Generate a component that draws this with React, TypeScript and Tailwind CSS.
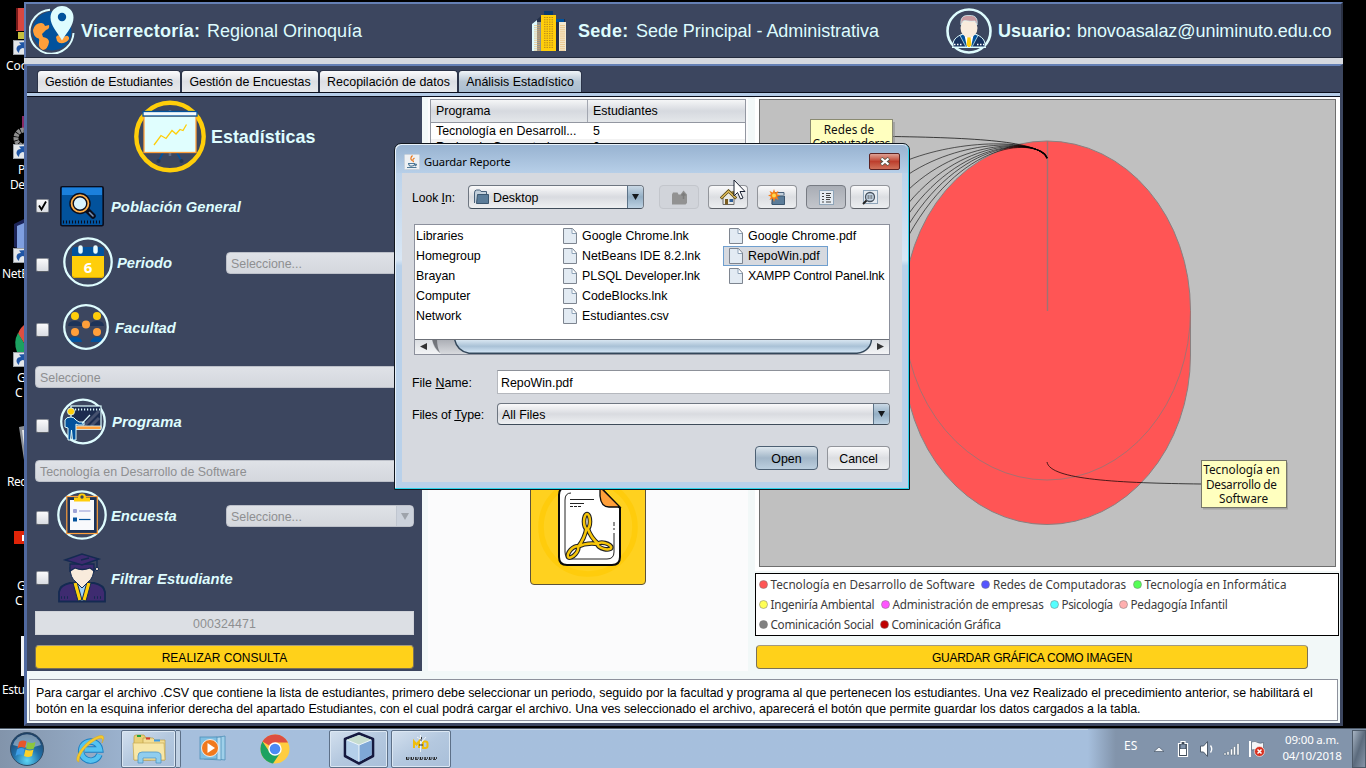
import React from "react";

const ARIAL = "font-['Liberation_Sans',Arial,sans-serif]";
const NOTO = "font-['Noto_Sans',sans-serif]";

/* ---------- Header icons ---------- */

function GlobeIcon() {
  return (
    <svg width="46" height="48" viewBox="0 0 46 48" className="shrink-0">
      <circle cx="23" cy="25" r="19.500" fill="#02529c" />
      <path d="M4 24 q2-7 8-7 q3 0 4 3 l4-1 q1 4-3 5 l-4 4 1 3 q6 1 6 5 q-1 7-6 8 q-5-2-4-8 q1-4-2-4 q-4-3-4-8z" fill="#ff9f3a" />
      <path d="M21 3.800 A22 22 0 1 0 44.500 27" fill="none" stroke="#defcfe" strokeWidth="2" />
      <path d="M27 31 q2-3 4-1 l2 3 q3-4 6-3 q3 3-2 6 q-6 3-9-1z" fill="#ff9f3a" />
      <path d="M33 0 a11.500 11.500 0 0 1 11.500 11.500 c0 8-6 14-11.500 23 c-5-9-11.500-15-11.500-23 a11.500 11.500 0 0 1 11.500-11.500z" fill="#defcfe" />
      <circle cx="33" cy="11" r="4.200" fill="#02529c" />
    </svg>
  );
}

function BuildingIcon() {
  const rows = Array.from({ length: 14 });
  return (
    <svg width="34" height="40" viewBox="0 0 34 40" className="shrink-0">
      <path d="M1 12 L9 5 V40 H1z" fill="#23304a" />
      <path d="M0 13 L5 9 V40 H0z" fill="#e0fbfd" />
      <rect x="5" y="11" width="4" height="29" fill="#8d8f8c" />
      <rect x="24" y="8" width="9" height="32" fill="#23304a" />
      <path d="M27 11 h7 v29 h-7z" fill="#f5ead0" />
      <rect x="24" y="8" width="8" height="3" fill="#02529c" />
      <rect x="12" y="0" width="9" height="4" fill="#0b3a6e" />
      <rect x="9" y="4" width="15" height="36" fill="#ffce0a" />
      {rows.map((_, i) => (
        <g key={i}>
          <path d={`M12 ${6.500 + i * 2.300} H22`} stroke="#b98a1c" strokeWidth="1" strokeDasharray="1.500 1" />
          <path d={`M2 ${14.500 + i * 1.900} H8 M28 ${14.500 + i * 1.900} H33`} stroke="#e6b366" strokeWidth=".6" />
        </g>
      ))}
    </svg>
  );
}

function UserIcon() {
  return (
    <svg width="46" height="46" viewBox="0 0 46 46" className="shrink-0">
      <circle cx="23" cy="23" r="21.500" fill="#3c465f" stroke="#defcfe" strokeWidth="2.600" />
      <path d="M7 39 C6 29 14 28 18 25 H28 C32 28 40 29 39 39z" fill="#17335f" stroke="#defcfe" strokeWidth="1" />
      <path d="M14 27.500 l5 -2 4 6 4-6 5 2 -6 11.500 h-6z" fill="#02529c" stroke="#defcfe" strokeWidth=".7" />
      <path d="M18 25 h10 l-3 14 h-4z" fill="#fff" />
      <path d="M21.500 29 h3 l1 8 -2.500 3 -2.500-3z" fill="#ffce0a" />
      <ellipse cx="23" cy="20" rx="8.500" ry="9.500" fill="#f9ebdc" />
      <path d="M15 17 C14 10 17 7 23 7.500 C30 7 32 11 31 17 L29 13 C24 14 19 12 17 13z" fill="#c79aa0" stroke="#defcfe" strokeWidth=".7" />
      <path d="M8 36.500 h8 M31 36.500 h7" stroke="#fff" strokeWidth="1.500" strokeDasharray="1.500 1.500" />
      <path d="M6 39.500 H40" stroke="#defcfe" strokeWidth="1.200" />
    </svg>
  );
}

/* ---------- Side panel icons ---------- */

function StatsIcon() {
  return (
    <svg width="72" height="73" viewBox="0 0 72 73" className="shrink-0">
      <circle cx="36" cy="36.500" r="33.700" fill="none" stroke="#ffce0a" strokeWidth="4.400" />
      <path d="M36 10 v3 M36 52 v4" stroke="#5b6b86" strokeWidth="2.500" />
      <path d="M29 53 l-4 7 M43 53 l4 7" stroke="#02529c" strokeWidth="1.600" />
      <circle cx="24.500" cy="61" r="2" fill="#263952" />
      <circle cx="47.500" cy="61" r="2" fill="#263952" />
      <rect x="10" y="16" width="52" height="36.500" fill="#e0fefe" stroke="#ff9f3a" strokeWidth="1.300" />
      <rect x="9" y="11.500" width="54" height="4.500" fill="#f4fafc" stroke="#02529c" strokeWidth="1.300" />
      <path d="M20 45 l7-9.500 5 3 6-8 4 3.500 4-4.500 3 1 3.500-6" fill="none" stroke="#ffce0a" strokeWidth="1.300" />
    </svg>
  );
}

function PopulationIcon() {
  return (
    <svg width="44" height="41" viewBox="0 0 44 41" className="shrink-0">
      <rect x=".8" y=".8" width="42.400" height="39" rx="1.500" fill="#02529c" stroke="#0a0d1c" strokeWidth="1.600" />
      <rect x="2" y="1.500" width="40" height="7.500" fill="#1b80dc" />
      <path d="M3 36 H41" stroke="#0a0d1c" strokeWidth="3" strokeDasharray="1 2" />
      <path d="M26 23 l7 7" stroke="#0a0d1c" strokeWidth="5.500" strokeLinecap="round" />
      <path d="M29.500 26.500 l3.500 3.500" stroke="#7a93b5" strokeWidth="1.600" strokeLinecap="round" />
      <circle cx="20" cy="17.500" r="10" fill="#ffb04a" stroke="#0a0d1c" strokeWidth="1.400" />
      <circle cx="20" cy="17.500" r="6.800" fill="#d9f4ff" stroke="#0a0d1c" strokeWidth="1.400" />
    </svg>
  );
}

function PeriodIcon() {
  return (
    <svg width="50" height="50" viewBox="0 0 50 50" className="shrink-0">
      <circle cx="25" cy="25" r="23.700" fill="none" stroke="#defcfe" strokeWidth="2.300" />
      <path d="M9 20 v-7 a3 3 0 0 1 3-3 h26 a3 3 0 0 1 3 3 v7 H9z" fill="#02529c" />
      <path d="M9 19 h32 v19 a3 3 0 0 1-3 3 H12 a3 3 0 0 1-3-3z" fill="#ffce0a" />
      <path d="M10 39.500 q1 1 3 1 h24 q2 0 3-1" stroke="#d9a900" fill="none" />
      <path d="M17.500 10.500 v4 M32.500 10.500 v4" stroke="#e8fcff" strokeWidth="4.500" strokeLinecap="round" />
      <text x="25" y="36" textAnchor="middle" fontSize="15" fontWeight="700" fontFamily="Noto Sans" fill="#fff">6</text>
    </svg>
  );
}

function FacultyIcon() {
  return (
    <svg width="46" height="46" viewBox="0 0 46 46" className="shrink-0">
      <path d="M5 22 q0-5 7-5 q7 0 7 5z M27 22 q0-5 7-5 q7 0 7 5z" fill="#1d3358" />
      <path d="M5 38 q0-5 7-5 q6 0 7 5z M27.500 38 q1-5 7-5 q6 0 6 5z" fill="#02529c" />
      <circle cx="12" cy="12" r="4" fill="#ffce0a" />
      <circle cx="34" cy="12" r="4" fill="#ffce0a" />
      <circle cx="23" cy="20.500" r="4" fill="#ff9f3a" />
      <circle cx="12" cy="28" r="4" fill="#ff9f3a" />
      <circle cx="34" cy="28" r="4" fill="#ff9f3a" />
      <circle cx="23" cy="23" r="21.800" fill="none" stroke="#defcfe" strokeWidth="2.300" />
    </svg>
  );
}

function ProgramIcon() {
  return (
    <svg width="46" height="47" viewBox="0 0 46 47" className="shrink-0">
      <circle cx="23" cy="23.500" r="21.800" fill="none" stroke="#defcfe" strokeWidth="2.300" />
      <rect x="11" y="8" width="30" height="22" fill="#1c2c4f" stroke="#defcfe" strokeWidth="1.200" />
      <path d="M24 28 L39 13 M31 28 l8-8" stroke="#46516e" strokeWidth="3" />
      <path d="M12 11.500 H40" stroke="#defcfe" strokeWidth="2" strokeDasharray="1.200 1.800" />
      <rect x="14" y="28" width="27" height="3.500" fill="#ff9f3a" stroke="#defcfe" strokeWidth=".8" />
      <path d="M5 22 q1-3 6-3 q3 0 5 3 l3 2 5 0 0 3 h-6 l-2-1 v6 v10 h-3.500 l-1-10 -1 10 H8 V30 l-3-1z" fill="#02529c" stroke="#defcfe" strokeWidth="1" />
      <path d="M22 25.500 L30 17" stroke="#defcfe" strokeWidth="1.200" />
      <circle cx="11" cy="13.500" r="3.600" fill="#ffce0a" stroke="#defcfe" strokeWidth=".8" />
    </svg>
  );
}

function SurveyIcon() {
  return (
    <svg width="50" height="50" viewBox="0 0 50 50" className="shrink-0">
      <circle cx="25" cy="25" r="23.700" fill="none" stroke="#defcfe" strokeWidth="2.300" />
      <rect x="9.800" y="6.500" width="30.500" height="37" fill="#1d3358" stroke="#ff9f3a" strokeWidth="1.200" />
      <rect x="13" y="10" width="24" height="30" fill="#f8f9fc" />
      <path d="M17 11.500 v-4 h4 q0-4 4-4 q4 0 4 4 h4 v4z" fill="#ffce0a" />
      <circle cx="25" cy="7" r="1.700" fill="#3c465f" />
      <rect x="16" y="19" width="4" height="4" rx="1" fill="#9ea3d6" />
      <path d="M22 21 h11.500" stroke="#b7bbe2" strokeWidth="1.600" />
      <rect x="16" y="27.500" width="4" height="4" fill="#02529c" />
      <path d="M22 29.500 h11.500" stroke="#02529c" strokeWidth="1.200" />
    </svg>
  );
}

function StudentIcon() {
  return (
    <svg width="48" height="50" viewBox="0 0 48 50" className="shrink-0">
      <path d="M1 48.500 V39 q1-7 11-9 h24 q10 2 11 9 v9.500z" fill="#3e2b70" stroke="#142a52" strokeWidth="1.800" />
      <path d="M18 28 h12 l-3 20 h-6z" fill="#9fd4fa" />
      <path d="M15 30 l4-1 5 18 -4 1z" fill="#ffce0a" stroke="#142a52" strokeWidth="1" />
      <path d="M33 30 l-4-1 -5 18 4 1z" fill="#ffce0a" stroke="#142a52" strokeWidth="1" />
      <path d="M12 14 h24 q0 11-6 15 l-6 6 -6-6 q-6-4-6-15z" fill="#f9ebdc" stroke="#142a52" strokeWidth="1" />
      <path d="M12 18 V11 h24 v7 l-4-3 q-8 3-15 0z" fill="#3e2b70" stroke="#142a52" strokeWidth="1.300" />
      <path d="M7 7 L24 1 L41 6 L24 12z" fill="#3e2b70" stroke="#142a52" strokeWidth="1.400" />
      <path d="M23 7 l8-2 M39 6 v8" stroke="#142a52" strokeWidth="1.300" />
      <circle cx="39" cy="16" r="1.600" fill="#f9ebdc" stroke="#142a52" />
      <path d="M3 44.500 h9 M36 44.500 h9" stroke="#142a52" strokeWidth="2.500" strokeDasharray="1 2" />
    </svg>
  );
}

/* ---------- Form controls ---------- */

function Check({ checked, className = "" }: { checked?: boolean; className?: string }) {
  return (
    <span className={`ml-[1px] h-[14px] w-[13px] shrink-0 rounded-[2px] border border-[#8d929b] border-b-[#5b6069] bg-linear-to-b from-[#fafafb] to-[#d9dce2] ${className}`}>
      {checked && (
        <svg width="11" height="12" viewBox="0 0 11 12">
          <path d="M2 5.500 L4.500 9.500 L9 1.500" fill="none" stroke="#000" strokeWidth="1.800" />
        </svg>
      )}
    </span>
  );
}

function DisabledCombo({ text, className = "" }: { text: string; className?: string }) {
  return (
    <div className={`flex h-[22px] shrink-0 overflow-hidden rounded-[4px] border border-[#bcc0c9] bg-linear-to-b from-[#dfe2e7] to-[#d4d7dd] text-[12.4px] text-[#8e8f91] ${className}`}>
      <span className="flex-1 pl-[4px] leading-[22px] whitespace-nowrap">{text}</span>
      <span className="flex w-[17px] items-center justify-center border-l border-[#c0c6d0] bg-[#ccd2dc]">
        <svg width="8" height="7"><path d="M0 0 h8 l-4 7z" fill="#9ea3ab" /></svg>
      </span>
    </div>
  );
}

const labelCls = "text-[14.8px] leading-5 font-bold italic text-[#defcfe] whitespace-nowrap";

function SidePanel() {
  return (
    <section className="h-[574px] w-[395px] shrink-0 bg-[#3c465f] pl-[8px]">
      <div className="flex h-[79px] items-center pl-[98px]">
        <span className="pl-[.5px]"><StatsIcon /></span>
        <span className="mt-[2px] ml-[5.500px] text-[17.9px] font-bold text-[#defcfe]">Estadísticas</span>
      </div>
      <div className="flex h-[60px] items-center">
        <Check checked />
        <span className="ml-[11px]"><PopulationIcon /></span>
        <span className={`${labelCls} ml-[7px] mt-[1px]`}>Población General</span>
      </div>
      <div className="flex h-[52px] items-center">
        <Check className="mt-[6px]" />
        <span className="ml-[14px]"><PeriodIcon /></span>
        <span className={`${labelCls} mt-[2px] ml-[4px] w-[109px]`}>Periodo</span>
        <DisabledCombo text="Seleccione..." className="mt-[2px] w-[188px]" />
      </div>
      <div className="flex h-[78px] items-center">
        <Check className="mt-[6px]" />
        <span className="ml-[14px]"><FacultyIcon /></span>
        <span className={`${labelCls} mt-[2px] ml-[6px]`}>Facultad</span>
      </div>
      <DisabledCombo text="Seleccione" className="w-[379px]" />
      <div className="flex h-[72px] items-center pb-[6px]">
        <Check className="mt-[9px]" />
        <span className="ml-[11px]"><ProgramIcon /></span>
        <span className={`${labelCls} mt-[2px] ml-[6px] tracking-[.08px]`}>Programa</span>
      </div>
      <DisabledCombo text="Tecnología en Desarrollo de Software" className="w-[379px]" />
      <div className="flex h-[66px] items-center">
        <Check className="mt-[6px]" />
        <span className="ml-[8px]"><SurveyIcon /></span>
        <span className={`${labelCls} mt-[2px] ml-[4px] w-[115px]`}>Encuesta</span>
        <DisabledCombo text="Seleccione..." className="mt-[2px] w-[188px]" />
      </div>
      <div className="flex h-[63px] items-center pb-[4px]">
        <Check className="mt-[1px]" />
        <span className="ml-[9px]"><StudentIcon /></span>
        <span className={`${labelCls} mt-[3px] ml-[5px]`}>Filtrar Estudiante</span>
      </div>
      <div className="h-[24px] w-[379px] border border-[#d0d3d9] bg-[#dcdfe4] text-center text-[12.4px] leading-[24px] tracking-[.1px] text-[#8e8f91]">000324471</div>
      <button className="mt-[10px] block h-[24px] w-[379px] rounded-[4px] border border-[#7b7258] border-t-[#a39a80] bg-[#ffd11a] pt-px text-center text-[12px] leading-[23px] text-black">REALIZAR CONSULTA</button>
    </section>
  );
}

function PdfIcon() {
  const loops = (
    <>
      <ellipse cx="56" cy="51.500" rx="3" ry="7.500" />
      <ellipse cx="42" cy="82" rx="3.200" ry="7" transform="rotate(42 42 82)" />
      <ellipse cx="73.500" cy="76" rx="7" ry="3" transform="rotate(14 73.500 76)" />
      <path d="M55.500 58 Q54 68 47 77 M56.500 58 Q60 68 67.500 74 M46 77 Q56 72 67 74" />
    </>
  );
  return (
    <svg width="114" height="114" viewBox="0 0 114 114">
      <circle cx="57" cy="57" r="47" fill="none" stroke="#ffcc0c" strokeWidth="5.500" />
      <path d="M36 17 h33 l20 21 v49 q0 8-8 8 H36 q-8 0-8-8 V25 q0-8 8-8z" fill="#fff" stroke="#0a0a0a" strokeWidth="2" />
      <path d="M69 17 v9 q1 11 9 11 h11z" fill="#ff9f3a" stroke="#0a0a0a" strokeWidth="1.300" />
      <path d="M40 23 q-6 0-6 7 v52 q0 7 7 7 h35 q7 0 7-7 v-19 M83 60 v-2 M83 56 v-4" fill="none" stroke="#222" strokeWidth="1" />
      <path d="M39 29.500 h24 M39 33.500 h14" stroke="#222" strokeWidth="1" />
      <path d="M39 36.500 h11" stroke="#222" strokeWidth="1" strokeDasharray="3 1" />
      <g fill="none" stroke="#222" strokeWidth="4.600">{loops}</g>
      <g fill="none" stroke="#f7c60a" strokeWidth="2.500">{loops}</g>
    </svg>
  );
}

function MiddlePanel() {
  return (
    <section className="ml-[6px] flex h-[574px] w-[320px] shrink-0 flex-col items-center bg-[#fbfbfc] pt-[2px] text-[12.4px] text-black">
      <div className="w-[316px] border border-[#9397a1] bg-white">
        <div className="flex h-[23px] border-b border-[#9397a1] bg-linear-to-b from-[#f5f6f7] via-[#d6d9df] to-[#e4e7ea] leading-[22px]">
          <span className="w-[157px] border-r border-[#a3a7b1] pl-[5px]">Programa</span>
          <span className="pl-[5px]">Estudiantes</span>
        </div>
        <div className="flex h-[16px] leading-[17px]">
          <span className="w-[157px] pl-[5px] whitespace-nowrap">Tecnología en Desarroll...</span>
          <span className="pl-[5px]">5</span>
        </div>
        <div className="flex h-[16px] bg-[#f2f2f2] leading-[17px]">
          <span className="w-[157px] pl-[5px] whitespace-nowrap">Redes de Computadoras</span>
          <span className="pl-[5px]">0</span>
        </div>
      </div>
      <div className="mt-auto mb-[86px] h-[116px] w-[116px] rounded-[4px] border border-[#5d533b] bg-[#ffd11f]">
        <PdfIcon />
      </div>
    </section>
  );
}

/* ---------- Chart ---------- */

const LINKS: [number, number][] = [[162, 138], [178, 137], [195, 136], [210, 135], [222, 135], [234, 134], [246, 134]];

function PieChart() {
  return (
    <svg width="577" height="468" viewBox="759 99 577 468" className="block">
      <rect x="759.500" y="99.500" width="576" height="467" fill="#c0c0c0" stroke="#6e6e6e" />
      <path d="M903.500 310.500 A143.500 169.500 0 0 1 1190.500 310.500 V355 A143.500 169.500 0 0 1 903.500 355z" fill="#ff5555" stroke="#8a8080" />
      <path d="M903.500 310.500 A143.500 169.500 0 0 0 1190.500 310.500" fill="none" stroke="#a87070" />
      <path d="M1047.500 141 V311" stroke="#a07272" strokeWidth="1.400" />
      <path d="M1047 158 C1040 142 985 138 893 136.500" fill="none" stroke="#000" strokeWidth=".7" />
      {LINKS.map(([end, c], i) => (
        <path key={i} d={`M1047 158 C1040 139 960 ${c} 903 ${end}`} fill="none" stroke="#000" strokeWidth=".6" />
      ))}
      <path d="M1040 151 Q1046 154 1047 158.500" fill="none" stroke="#000" strokeWidth="1.600" />
      <path d="M1047 462 C1050 480 1120 483 1201 484" fill="none" stroke="#000" strokeWidth=".7" />
      <rect x="813" y="122" width="82" height="40" fill="#8f8f8f" opacity=".6" />
      <rect x="810.500" y="119.500" width="82" height="40" fill="#ffffbf" stroke="#8a8a72" />
      <rect x="1203" y="462.500" width="85" height="47" fill="#8f8f8f" opacity=".6" />
      <rect x="1201.500" y="460.500" width="85" height="47" fill="#ffffbf" stroke="#77776a" />
      <g fontFamily="Noto Sans" fontSize="11.800" textAnchor="middle" fill="#111">
        <text x="849" y="134">Redes de</text>
        <text x="851.500" y="148" textLength="78">Computadoras</text>
        <text x="1241.500" y="474">Tecnología en</text>
        <text x="1241.500" y="489" textLength="71">Desarrollo de</text>
        <text x="1243.500" y="503">Software</text>
      </g>
    </svg>
  );
}

function LegendItem({ color, text, className = "" }: { color: string; text: string; className?: string }) {
  return (
    <span className={`flex shrink-0 items-center whitespace-nowrap ${className}`}>
      <svg width="9" height="9" className="mr-[3px] shrink-0"><circle cx="4.500" cy="4.500" r="4" fill={color} stroke="#777" strokeWidth=".5" /></svg>
      {text}
    </span>
  );
}

function Legend() {
  return (
    <div className={`mt-[2px] flex h-[63px] w-[584px] flex-col border border-black bg-white pt-[1px] pl-[2.500px] text-[11.700px] text-[#3c3c3c] ${NOTO}`}>
      <div className="flex h-[20px]">
        <LegendItem color="#ff5555" text="Tecnología en Desarrollo de Software" className="w-[222.500px]" />
        <LegendItem color="#5555ff" text="Redes de Computadoras" className="w-[151.500px] tracking-[-.08px]" />
        <LegendItem color="#55ff55" text="Tecnología en Informática" className="tracking-[-.04px]" />
      </div>
      <div className="flex h-[20px]">
        <LegendItem color="#ffff55" text="Ingeniría Ambiental" className="w-[122px] tracking-[-.27px]" />
        <LegendItem color="#ff55ff" text="Administración de empresas" className="w-[169px] tracking-[-.2px]" />
        <LegendItem color="#55ffff" text="Psicología" className="w-[69px] tracking-[-.4px]" />
        <LegendItem color="#ffafaf" text="Pedagogía Infantil" className="tracking-[-.2px]" />
      </div>
      <div className="flex h-[21px]">
        <LegendItem color="#808080" text="Cominicación Social" className="w-[121px] tracking-[-.27px]" />
        <LegendItem color="#c00000" text="Cominicación Gráfica" className="tracking-[-.32px]" />
      </div>
    </div>
  );
}

function ChartPanel() {
  return (
    <section className="ml-[7px] h-[574px] w-[585px]">
      <div className="h-[474px] bg-white pt-[2px] pl-[4px]"><PieChart /></div>
      <Legend />
      <button className="mt-[9px] ml-[1px] block h-[24px] w-[552px] rounded-[4px] border border-[#7b7258] border-t-[#a39a80] bg-[#ffd11a] pt-px text-center text-[12px] leading-[23px] tracking-[-.27px] text-black">GUARDAR GRÁFICA COMO IMAGEN</button>
    </section>
  );
}

/* ---------- Main window ---------- */

function Tab({ text, active, className = "" }: { text: string; active?: boolean; className?: string }) {
  return (
    <span className={`h-[22px] rounded-t-[4px] border border-b-0 border-[#2b3348] pt-[1px] text-center leading-[20px] whitespace-nowrap ${active ? "bg-linear-to-b from-[#f0f4f8] via-[#b7c6d4] to-[#a9bdd0]" : "bg-linear-to-b from-[#fbfbfc] via-[#dddfe4] to-[#e7e9ec]"} ${className}`}>{text}</span>
  );
}

function MainWindow() {
  return (
    <div className="absolute top-[2px] left-[24px] flex h-[724px] w-[1319px] flex-col">
      <header className="flex h-[56px] shrink-0 items-center border-t-2 border-r-2 border-b border-l-2 border-t-[#6580b5] border-r-[#2a3144] border-b-[#232a3c] border-l-[#5f7bb3] bg-[#3c465f] text-[18px] text-[#defcfe]">
        <div className="flex w-[506px] items-center pb-px pl-[3px]">
          <GlobeIcon />
          <span className="mt-[3px] ml-[6px] w-[126px] font-bold tracking-[.25px] whitespace-nowrap">Vicerrectoría:</span>
          <span className="mt-[3px] whitespace-nowrap">Regional Orinoquía</span>
        </div>
        <div className="flex w-[414px] items-center">
          <BuildingIcon />
          <span className="mt-[2px] ml-[12px] w-[58px] font-bold tracking-[.3px] whitespace-nowrap">Sede:</span>
          <span className="mt-[2px] tracking-[-.04px] whitespace-nowrap">Sede Principal - Administrativa</span>
        </div>
        <div className="flex items-center">
          <UserIcon />
          <span className="mt-[2px] ml-[6px] w-[79px] font-bold tracking-[.05px] whitespace-nowrap">Usuario:</span>
          <span className="mt-[2px] tracking-[-.07px] whitespace-nowrap">bnovoasalaz@uniminuto.edu.co</span>
        </div>
      </header>
      <div className="h-[6px] shrink-0 bg-[#d6d9df]" />
      <main className="flex flex-1 flex-col border-t-2 border-r-3 border-b-3 border-l-3 border-t-[#6580b5] border-r-[#3c465f] border-b-[#3c465f] border-l-[#5069a0] bg-[#f2f8f8]">
        <div className="flex h-[26px] shrink-0 items-end bg-[#3c465f] pl-[10px] text-[12.4px] text-black">
          <Tab text="Gestión de Estudiantes" className="w-[144px]" />
          <Tab text="Gestión de Encuestas" className="w-[138px]" />
          <Tab text="Recopilación de datos" className="w-[139px] tracking-[.05px]" />
          <Tab text="Análisis Estadístico" active className="w-[124px] tracking-[.05px]" />
        </div>
        <div className="h-[5px] shrink-0 border-y border-[#0a0e1c] bg-[#b4cbe6]" />
        <div className="flex">
          <SidePanel />
          <MiddlePanel />
          <ChartPanel />
        </div>
        <div className="mt-[8px] ml-[2px] h-[42px] w-[1309px] border border-[#8d919c] bg-white pt-[5px] pl-[6px] text-[12.4px] leading-[16px] tracking-[-.022px] text-black">
          <p className="whitespace-nowrap">Para cargar el archivo .CSV que contiene la lista de estudiantes, primero debe seleccionar un periodo, seguido por la facultad y programa al que pertenecen los estudiantes. Una vez Realizado el precedimiento anterior, se habilitará el</p>
          <p className="whitespace-nowrap">botón en la esquina inferior derecha del apartado Estudiantes, con el cual podrá cargar el archivo. Una ves seleccionado el archivo, aparecerá el botón que permite guardar los datos cargados a la tabla.</p>
        </div>
      </main>
    </div>
  );
}

/* ---------- File dialog ---------- */

function JavaIcon() {
  return (
    <svg width="16" height="16" viewBox="0 0 16 16" className="shrink-0">
      <rect x=".5" y=".5" width="15" height="15" rx="1" fill="#eef1f4" stroke="#c9d2dc" />
      <path d="M8.500 1.500 q-3 3-.5 5 M10.500 4 q-3 2-.8 4" fill="none" stroke="#e8761c" strokeWidth="1.200" />
      <path d="M4 9.500 h7 M4.500 9.500 q.5 3 3.500 2.500 q2.500 0 3-2.500 M11 10 q3 0 0 2 M3 13.500 h9.500" fill="none" stroke="#4e7896" strokeWidth="1.200" />
    </svg>
  );
}

function FileIcon() {
  return (
    <svg width="14" height="16" viewBox="0 0 14 16" className="shrink-0">
      <path d="M.5 .5 h9 l4 4.500 v10.500 h-13z" fill="#dfe8f1" stroke="#7e8590" />
      <path d="M1.500 1.500 h7.500 v4.500 h3.500 v8.500 h-11z" fill="#e3ebf3" />
      <path d="M9 1 v4.500 h4" fill="#fff" stroke="#8ea3b8" />
    </svg>
  );
}

function FolderIcon() {
  return (
    <svg width="16" height="16" viewBox="0 0 16 16">
      <path d="M1.500 14 V4 q0-3 2-3 h3 q1 0 1.500 1.500 h5.500 V6" fill="#c3d0dc" stroke="#49617a" />
      <path d="M4.500 5.500 h11 v9 H3.500z" fill="#5b7c99" stroke="#3b566f" />
    </svg>
  );
}

const toolBtn = "flex h-[24px] w-[40px] shrink-0 items-center justify-center rounded-[4px] border";
const toolBtnLive = "border-[#92959b] border-b-[#5c6067] bg-linear-to-b from-[#fafafb] via-[#dcdee2] to-[#eceef0]";

function ComboArrow() {
  return (
    <span className="flex w-[16px] items-center justify-center border-l border-[#5c7388] bg-linear-to-b from-[#c9d8e5] via-[#93aec4] to-[#bdd2e3]">
      <svg width="7" height="8"><path d="M0 1 h7 l-3.500 6z" fill="#15191d" /></svg>
    </span>
  );
}

function FileRow({ text, selected, className = "" }: { text: string; selected?: boolean; className?: string }) {
  return (
    <div className="flex">
      <span className={`flex h-[20px] items-center border pr-[7px] pl-[5px] whitespace-nowrap ${selected ? "border-[#6f9fcf] bg-[#d6d9df]" : "border-transparent"}`}>
        <FileIcon />
        <span className={`ml-[5px] ${className}`}>{text}</span>
      </span>
    </div>
  );
}

function Dialog() {
  return (
    <div className="absolute top-[143px] left-[394px] flex h-[347px] w-[516px] flex-col rounded-t-[7px] border border-[#10161e] bg-[#b9d1ea] shadow-[inset_-1px_-1px_0_#2bd3ea,inset_1px_1px_0_#e9f2fa]">
      <div className="mx-px mt-px flex h-[28px] shrink-0 items-center rounded-t-[6px] bg-linear-to-b from-[#98b3d1] to-[#b7cfe8] pl-[8px]">
        <span className="mt-[5px]"><JavaIcon /></span>
        <span className={`mt-[6px] ml-[4px] text-[11.200px] tracking-[-.12px] text-black ${NOTO}`}>Guardar Reporte</span>
        <span className="mt-[5px] mr-[8px] ml-auto flex h-[17px] w-[31px] items-center justify-center rounded-[2px] border border-[#5b2222] bg-linear-to-b from-[#dda094] via-[#bd3e2d] to-[#cf7059]">
          <svg width="12" height="9" viewBox="0 0 12 9"><path d="M2 1.500 L10 7.500 M10 1.500 L2 7.500" stroke="#554" strokeWidth="4" /><path d="M2.500 1.500 L9.500 7.500 M9.500 1.500 L2.500 7.500" stroke="#fff" strokeWidth="2.300" /></svg>
        </span>
      </div>
      <div className="mx-px flex h-[309px]">
        <div className="w-[6px] bg-linear-to-b from-[#bcd3eb] via-[#d9e7f5] via-28% to-[#b9d1ea] to-30%" />
        <div className="w-[500px] bg-[#d6d9df] text-[12.4px] text-black">
          <div className="flex h-[36px] pt-[12px] pl-[10px]">
            <span className="w-[56px] pt-px text-[12.1px] leading-[25px]">Look <u>I</u>n:</span>
            <div className="flex h-[24px] w-[176px] overflow-hidden rounded-[4px] border border-[#6e7681] border-b-[#3f4c5a] bg-linear-to-b from-[#fafafb] via-[#d9dbe0] to-[#eef0f2]">
              <span className="flex flex-1 items-center pl-[4px]"><FolderIcon /><span className="mt-[2px] ml-[4px]">Desktop</span></span>
              <ComboArrow />
            </div>
            <span className={`${toolBtn} ml-[15px] border-[#c3c6cc] bg-[#d1d4da]`}>
              <svg width="17" height="17" viewBox="0 0 17 17"><path d="M1 15.500 V5.500 l1-2 h4.500 l1 2 h2 l3-4 L16 5.500 V14 l-1.500 1.500z" fill="#929292" /><path d="M12.500 5 v5 M10.500 6.500 l2-2 2 2" fill="none" stroke="#7c7c7c" strokeWidth="1.500" /></svg>
            </span>
            <span className={`${toolBtn} ml-[9px] ${toolBtnLive}`}>
              <svg width="17" height="17" viewBox="0 0 17 17"><path d="M3 8.500 L8.500 3 L14 8.500 V15.500 H3z" fill="#e9e9e4" stroke="#6a6a6a" /><path d="M11.500 3 h2 v3" fill="none" stroke="#8a6d1c" strokeWidth="1.500" /><path d="M.8 9.500 L8.500 2 L16.200 9.500" fill="none" stroke="#5c4a14" strokeWidth="3" /><path d="M1.300 9 L8.500 2.200 L15.700 9" fill="none" stroke="#e3c05c" strokeWidth="1.300" /><rect x="5" y="10" width="3" height="5.500" fill="#7a5c20" /><rect x="9.500" y="10" width="3.500" height="3" fill="#2f5f9a" /></svg>
            </span>
            <span className={`${toolBtn} ml-[9px] ${toolBtnLive}`}>
              <svg width="18" height="17" viewBox="0 0 18 17"><path d="M4 15 V6 h2 V3.500 h10 V6" fill="#c3d0dc" stroke="#49617a" /><path d="M5 7 h11.500 v8.500 H4z" fill="#5b7c99" stroke="#3b566f" /><path d="M6 0 l1.200 3.400 3.300-1.500-1.500 3.300 3.400 1.300-3.400 1.200 1.500 3.300-3.300-1.500L6 13l-1.200-3.500-3.300 1.500 1.500-3.300L0 6.500l3-1.300L1.500 1.900l3.300 1.500z" fill="#f57f17" /><circle cx="6" cy="6.500" r="2" fill="#ffd94c" /></svg>
            </span>
            <span className={`${toolBtn} ml-[9px] border-[#777b83] bg-linear-to-b from-[#a9adb5] to-[#c3c6cc]`}>
              <svg width="15" height="15" viewBox="0 0 15 15"><rect x=".5" y=".5" width="14" height="14" fill="#e6ecf2" stroke="#8fa5b9" /><path d="M3 3.500 h2 M3 6.500 h2 M3 9.500 h2 M3 12 h2 M7 3.500 h5 M7 5.500 h4 M7 7.500 h5 M7 9.500 h4 M7 12 h5" stroke="#444" /></svg>
            </span>
            <span className={`${toolBtn} ml-[4px] ${toolBtnLive}`}>
              <svg width="16" height="15" viewBox="0 0 16 15"><rect x="1.500" y=".5" width="14" height="13" fill="#e6ecf2" stroke="#8fa5b9" /><circle cx="8" cy="7" r="4.500" fill="#c5d6e6" stroke="#48525e" strokeWidth="1.300" /><path d="M5.500 6 h5 M5.500 8 h5" stroke="#444" strokeWidth="1.200" strokeDasharray="2 .8" /><path d="M4.500 10.500 L1 14" stroke="#222" strokeWidth="2" /></svg>
            </span>
          </div>
          <div className="mt-[15px] ml-[12px] flex h-[131px] w-[476px] flex-col border border-[#8c909c] bg-white">
            <div className="flex flex-1 leading-[20px]">
              <div className="w-[142px] shrink-0 pt-px pl-px">
                {["Libraries", "Homegroup", "Brayan", "Computer", "Network"].map((t) => <div key={t}>{t}</div>)}
              </div>
              <div className="w-[166px] shrink-0 pt-px">
                {["Google Chrome.lnk", "NetBeans IDE 8.2.lnk", "PLSQL Developer.lnk", "CodeBlocks.lnk", "Estudiantes.csv"].map((t) => <FileRow key={t} text={t} />)}
              </div>
              <div className="shrink-0 pt-px">
                <FileRow text="Google Chrome.pdf" />
                <FileRow text="RepoWin.pdf" selected />
                <FileRow text="XAMPP Control Panel.lnk" className="tracking-[-.21px]" />
              </div>
            </div>
            <svg width="474" height="15" viewBox="0 0 474 15" className="shrink-0">
              <defs>
                <linearGradient id="track" x1="0" x2="0" y1="0" y2="1"><stop offset="0" stopColor="#a9acb3" /><stop offset="1" stopColor="#d8dade" /></linearGradient>
                <linearGradient id="end" x1="0" x2="0" y1="0" y2="1"><stop offset="0" stopColor="#d9dce0" /><stop offset="1" stopColor="#f3f4f6" /></linearGradient>
                <linearGradient id="thumb" x1="0" x2="0" y1="0" y2="1"><stop offset="0" stopColor="#dfeaf3" /><stop offset=".15" stopColor="#cfdfec" /><stop offset=".5" stopColor="#a9c1d6" /><stop offset="1" stopColor="#d9ebfa" /></linearGradient>
              </defs>
              <rect width="474" height="15" fill="url(#track)" />
              <path d="M0 0 H17 Q18 10 26 15 H0z" fill="url(#end)" />
              <path d="M17 0 Q19 9 25 14 Q22 8 22 0z" fill="#55585e" opacity=".7" />
              <path d="M456 0 H474 V15 H446 Q456 11 456 0z" fill="url(#end)" />
              <path d="M39.500 0 Q42 12 54 14.500 H442 Q456 12 456.500 0z" fill="url(#thumb)" />
              <path d="M39.500 0 Q42 12 54 14.300 H442 Q456 12 456.500 0" fill="none" stroke="#33475a" strokeWidth="1.400" />
              <path d="M0 .5 H474" stroke="#6c7078" />
              <path d="M5 7.500 l7-3.500 v7z M469 7.500 l-7-3.500 v7z" fill="#333" />
            </svg>
          </div>
          <div className="mt-[15px] flex h-[24px] pl-[10px] leading-[25px]">
            <span className="w-[85px] pt-px">File <u>N</u>ame:</span>
            <span className="w-[393px] border border-[#b5b8be] border-t-[#8d9199] bg-white pl-[3px] leading-[24px]">RepoWin.pdf</span>
          </div>
          <div className="mt-[9px] flex h-[22px] pl-[10px] leading-[23px]">
            <span className="w-[85px] pt-px tracking-[-.1px]">Files of <u>T</u>ype:</span>
            <div className="flex w-[393px] overflow-hidden rounded-[4px] border border-[#6e7681] border-b-[#3f4c5a] bg-linear-to-b from-[#fafafb] via-[#d9dbe0] to-[#eef0f2]">
              <span className="flex-1 pt-px pl-[4px] leading-[21px]">All Files</span>
              <ComboArrow />
            </div>
          </div>
          <div className="mt-[21px] flex justify-end gap-[9px] pr-[12px] leading-[23px]">
            <button className="h-[24px] w-[63px] rounded-[4px] border border-[#4d6073] bg-linear-to-b from-[#dde6ed] via-[#a2b6c8] to-[#bccfdf] pt-px text-center">Open</button>
            <button className="h-[24px] w-[63px] rounded-[4px] border border-[#92959b] border-b-[#5c6067] bg-linear-to-b from-[#fafafb] via-[#dcdee2] to-[#eceef0] pt-px text-center">Cancel</button>
          </div>
        </div>
        <div className="w-[6px] bg-linear-to-b from-[#bcd3eb] via-[#d9e7f5] via-28% to-[#b9d1ea] to-30%" />
      </div>
    </div>
  );
}

/* ---------- Desktop ---------- */

function ShortcutArrow({ className }: { className: string }) {
  return (
    <svg width="14" height="15" viewBox="0 0 14 15" className={`absolute left-[13px] ${className}`}>
      <rect x=".5" y=".5" width="14" height="14" fill="#e4e7ea" stroke="#9a9fa5" />
      <path d="M6 13 C2 10 3 5 8 5 L6 2.500 L14 2 V9 L9.500 8 Q6 9 6 13z" fill="#1f55a5" />
    </svg>
  );
}

function DesktopIcons() {
  return (
    <div className={`absolute top-0 left-0 h-[729px] w-[60px] text-[12px] leading-[15px] whitespace-nowrap text-white ${NOTO}`}>
      <svg width="24" height="729" viewBox="0 0 24 729" className="absolute top-0 left-0">
        <path d="M16 8 h8 v23 h-8z" fill="#d84840" />
        <path d="M16 8 h2 v22 h-2z" fill="#761919" />
        <path d="M18 32 h6 v7 h-6z" fill="#c5bf3e" />
        <path d="M22 116 h2 v14 h-2z" fill="#8a2a63" />
        <circle cx="24" cy="138" r="8" fill="none" stroke="#8f8f8f" strokeWidth="5" strokeDasharray="3 .8" />
        <path d="M14 224 L24 219 V250 L14 247z" fill="#1c2458" />
        <path d="M17 226 L24 223 V250 H17z" fill="#7f9fe0" />
        <path d="M24 325 A18 18 0 0 0 18 334 L24 343z" fill="#dd4f41" />
        <path d="M18 333 A22 22 0 0 0 17 352 H24 V343z" fill="#1ca261" />
        <path d="M19 427 L24 426 V460z" fill="#8b8f96" />
        <path d="M22 430 L24 430 V446z" fill="#e6e8ea" />
        <path d="M14 531 h10 v13 h-10z" fill="#e02408" />
        <path d="M22 535 h2 v6 h-2z" fill="#fff" />
        <path d="M21 636 h3 v40 h-3z" fill="#f1f3f5" />
      </svg>
      <ShortcutArrow className="top-[40px]" />
      <ShortcutArrow className="top-[144px]" />
      <ShortcutArrow className="top-[248px]" />
      <ShortcutArrow className="top-[352px]" />
      <span className="absolute top-[58px] left-[6px]">Coo</span>
      <span className="absolute top-[162px] left-[18px]">P</span>
      <span className="absolute top-[177px] left-[10px] tracking-[-.4px]">De</span>
      <span className="absolute top-[266px] left-[2px] tracking-[-.3px]">NetB</span>
      <span className="absolute top-[370px] left-[17px] tracking-tighter">G</span>
      <span className="absolute top-[385px] left-[15px]">C</span>
      <span className="absolute top-[474px] left-[7px] tracking-[-.5px]">Rec</span>
      <span className="absolute top-[578px] left-[17px] tracking-tighter">G</span>
      <span className="absolute top-[593px] left-[15px]">C</span>
      <span className="absolute top-[682px] left-[2px] tracking-[-.3px]">Estu</span>
    </div>
  );
}

function StartOrb() {
  return (
    <svg width="36" height="36" viewBox="0 0 36 36">
      <defs>
        <radialGradient id="orb" cx=".5" cy=".85" r=".8"><stop offset="0" stopColor="#5fd6f5" /><stop offset=".5" stopColor="#2272ab" /><stop offset="1" stopColor="#1c3f66" /></radialGradient>
      </defs>
      <circle cx="18" cy="18" r="16.500" fill="url(#orb)" stroke="#2f4a63" />
      <path d="M4 14 A14.500 14.500 0 0 1 32 14 Q18 19 4 14z" fill="#cfe0ec" opacity=".5" />
      <path d="M10 11 q4-2.500 7.500-.5 l-1.500 6.500 q-4-2-7.500 .5z" fill="#e8562a" />
      <path d="M18.500 11 q4 2 8 0 l-1.500 6.500 q-4 2-8 0z" fill="#8cc63e" />
      <path d="M8 18.500 q4-2.500 7.500-.5 l-1.500 6.500 q-4-2-7.500 .5z" fill="#3f9fe8" />
      <path d="M16.500 18.500 q4 2 8 0 l-1.500 6.500 q-4 2-8 0z" fill="#fcd12a" />
    </svg>
  );
}

function IeIcon() {
  return (
    <svg width="32" height="32" viewBox="0 0 32 32">
      <path d="M25.500 21.500 A9.500 9.500 0 1 1 26 16.500 H11" fill="none" stroke="#1b7fc2" strokeWidth="6.400" />
      <path d="M25.500 21.500 A9.500 9.500 0 1 1 26 16.500 H11" fill="none" stroke="#55c2f0" strokeWidth="4.600" />
      <path d="M5 29 C-2 28 8 10 22 4 C31 0 31 5 28 10 C30 4 26 4 20 8 C10 14 4 24 5 29z" fill="#f5c92e" stroke="#d9a818" strokeWidth=".5" />
    </svg>
  );
}

function ExplorerIcon() {
  return (
    <svg width="34" height="30" viewBox="0 0 34 30">
      <path d="M2 3 q0-2 2-2 h8 l2 3 h5 v22 H2z" fill="#e9cf77" stroke="#b99b43" strokeWidth=".7" />
      <path d="M11 4 h10 l2 2 h10 v20 H11z" fill="#f3de95" stroke="#b99b43" strokeWidth=".7" />
      <path d="M5 2 h4" stroke="#23a33a" strokeWidth="2" /><path d="M14 4.500 h4" stroke="#d3392d" strokeWidth="2" /><path d="M22 6.500 h6" stroke="#3f9ae0" strokeWidth="2" />
      <path d="M1 9 h31 l1 17 H2z" fill="#f7e7a8" stroke="#c7aa55" strokeWidth=".7" />
      <path d="M6 29 V22 q0-4 4-4 h14 q5 0 5 4 v7 h-5 v-5 h-13 v5z" fill="#90cdee" stroke="#4f94c4" strokeWidth=".8" />
    </svg>
  );
}

function WmpIcon() {
  return (
    <svg width="30" height="27" viewBox="0 0 30 27">
      <path d="M8 4 l18-3 v24 l-18-2z" fill="#9fd0ea" stroke="#4f8fb8" strokeWidth=".8" />
      <path d="M5 3 l17 -1 v23 l-17-1z" fill="#b9def2" stroke="#4f8fb8" strokeWidth=".8" />
      <rect x="1" y="2" width="17" height="22" fill="#7fbfe2" stroke="#4f8fb8" strokeWidth=".8" />
      <circle cx="11" cy="13" r="8.500" fill="#f0791e" stroke="#fff" strokeWidth=".8" />
      <path d="M8.500 8 v10 l7.500-5z" fill="#fff" />
    </svg>
  );
}

function ChromeIcon() {
  return (
    <svg width="30" height="30" viewBox="0 0 30 30">
      <circle cx="15" cy="15" r="14.500" fill="#ffcd40" />
      <path d="M15 15 L2.500 7.600 A14.500 14.500 0 0 1 28 8.500 H15z" fill="#dd4f41" />
      <path d="M2.500 7.600 A14.500 14.500 0 0 0 13 29.400 L20.500 18.500 L15 15 L9.500 18z" fill="#1ca261" />
      <circle cx="15" cy="15" r="6.700" fill="#fff" />
      <circle cx="15" cy="15" r="5.300" fill="#4a8af4" />
    </svg>
  );
}

function CubeIcon() {
  return (
    <svg width="32" height="33" viewBox="0 0 32 33">
      <path d="M16 1.500 L30 7 V24 L16 31.500 L2 24 V7z" fill="#a8c6e2" stroke="#15193f" strokeWidth="2.600" strokeLinejoin="round" />
      <path d="M16 3 L28.500 7.800 L16 13 L3.500 7.800z" fill="#c7ddcf" />
      <path d="M3.500 8 L16 13 V30 L3.500 23z" fill="#b4cfea" />
      <path d="M28.500 8 L16 13 V30 L28.500 23z" fill="#7fa8d6" />
      <path d="M4 8 L16 13 L28 8 M16 13 V29" fill="none" stroke="#eef6fb" strokeWidth="1" />
    </svg>
  );
}

function AppIcon() {
  return (
    <svg width="34" height="28" viewBox="0 0 34 28">
      <path d="M10 13 V6.500 l2.500 3 2.500-3 V13 M19 6.500 h2.500 q2 0 2 2 v2.500 q0 2-2 2 h-2.500z" fill="none" stroke="#f0bd0a" strokeWidth="2" />
      <path d="M16.500 0 V17 M13 2 l6 4 M17 8 l5 -6" stroke="#eef4f8" strokeWidth="1" />
      <path d="M17.500 2 v2 M16 5 h2 M15 10 h4" stroke="#222" strokeWidth=".9" />
      <path d="M2 23 h31" stroke="#1a1a1a" strokeWidth="2.200" strokeDasharray="1.300 1.200 .8 1.300" />
      <path d="M2 24.500 h31" stroke="#1a1a1a" strokeWidth=".8" strokeDasharray="3 1.500" />
    </svg>
  );
}

const taskBtn = "flex h-[38px] shrink-0 items-center justify-center rounded-[2px] border border-[#5d7088] bg-linear-to-br from-[#d3e0ee] via-[#b4c8df] to-[#a9bfd9] shadow-[inset_0_0_0_1px_#dbe7f3]";

function Taskbar() {
  return (
    <footer className="absolute top-[728px] left-0 flex h-[40px] w-[1366px] items-center border-t border-[#4e5a69] bg-linear-to-r from-[#8294ab] via-[#a6bfdd] via-13% to-[#a6bfdd] to-80% shadow-[inset_0_1px_0_#c6d6e6]">
      <span className="ml-[9px] w-[65px]"><StartOrb /></span>
      <span className="w-[47px]"><IeIcon /></span>
      <span className={`${taskBtn} w-[55px]`}><ExplorerIcon /></span>
      <span className="h-[38px] w-[5px] rounded-r-[2px] border border-l-0 border-[#5d7088] bg-[#bfd0e3]" />
      <span className="ml-[18px] w-[61px]"><WmpIcon /></span>
      <span className="w-[69px]"><ChromeIcon /></span>
      <span className={`${taskBtn} w-[59px]`}><CubeIcon /></span>
      <span className={`${taskBtn} ml-[3px] w-[60px]`}><AppIcon /></span>
      <div className={`ml-auto flex h-full items-center bg-linear-to-r from-[#a6bfdd] via-[#8294ab] via-10% to-[#8294ab] pl-[36px] text-[11.500px] text-white ${NOTO}`}>
        <span className="w-[28px] pb-[5px] text-[12px]">ES</span>
        <svg width="14" height="10" className="mt-[2px]"><path d="M7 2 l5 4.500 h-10z" fill="#eef2f6" stroke="#4c5a6b" strokeWidth=".7" /></svg>
        <svg width="14" height="18" viewBox="0 0 14 18" className="ml-[10px]"><path d="M5 1.500 h4 v2 h2.500 v13 h-9 v-13 h2.500z" fill="#3e4a58" stroke="#fff" strokeWidth="1.200" /><path d="M4.500 4.500 h5 v4 h-5z" fill="#8294ab" /><rect x="4" y="9" width="6" height="6" fill="#fff" /></svg>
        <svg width="16" height="18" viewBox="0 0 16 18" className="ml-[9px]"><path d="M1.500 6 h3 l4-4.500 v15 l-4-4.500 h-3z" fill="#fff" stroke="#4c5a6b" /><path d="M11.500 5.500 q2.500 3.500 0 7" fill="none" stroke="#fff" strokeWidth="1.300" /></svg>
        <svg width="18" height="14" viewBox="0 0 18 14" className="ml-[8px]"><path d="M1 11 h2 v2 h-2z M4 9.500 h2 v3.500 h-2z M7.500 7 h2 v6 h-2z M10.500 4.500 h2 v8.500 h-2z M14 1.500 h2 v11.500 h-2z" fill="#fff" stroke="#4c5a6b" strokeWidth=".4" /></svg>
        <svg width="18" height="18" viewBox="0 0 18 18" className="ml-[7px]"><path d="M2 1 v16" stroke="#fff" strokeWidth="2" /><path d="M3.500 2 q4-1.500 6 .5 q3 1.500 6 0 v8 q-3 1.500-6 0 q-3-1.500-6-.5z" fill="#f3f5f7" stroke="#4c5a6b" strokeWidth=".6" /><circle cx="11.500" cy="11.500" r="5" fill="#d8301f" stroke="#fff" strokeWidth=".6" /><path d="M9.500 9.500 l4 4 M13.500 9.500 l-4 4" stroke="#fff" strokeWidth="1.500" /></svg>
        <span className="ml-[9px] w-[74px] pb-px text-center leading-[16.500px] tracking-[-.2px]">09:00 a.m.<br />04/10/2018</span>
        <span className="ml-[3px] h-[38px] w-[14px] border border-[#4d5a69] bg-linear-to-br from-[#a7b4c3] via-[#5c6b7d] to-[#8695a8]" />
      </div>
    </footer>
  );
}

export default function App() {
  return (
    <div className={`relative h-[768px] w-[1366px] overflow-hidden bg-black ${ARIAL}`}>
      <DesktopIcons />
      <MainWindow />
      <Dialog />
      <svg width="14" height="21" viewBox="0 0 14 21" className="absolute top-[179px] left-[733px]">
        <path d="M1 1 V17 L4.500 13.500 L7.500 20 L10 19 L7 12.500 H12z" fill="#fff" stroke="#1b2233" strokeWidth="1" />
      </svg>
      <Taskbar />
    </div>
  );
}
